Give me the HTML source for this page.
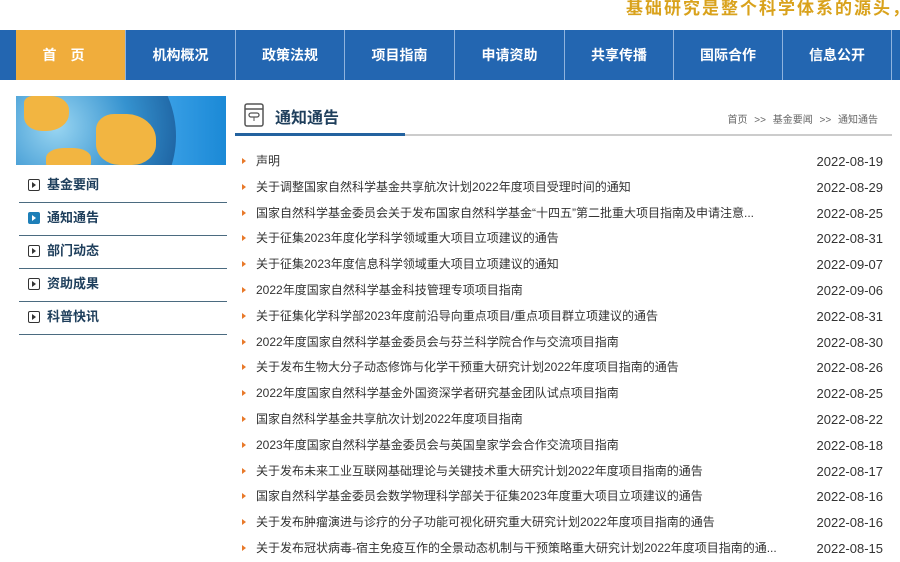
<!DOCTYPE html>
<html><head><meta charset="utf-8"><style>
*{margin:0;padding:0;box-sizing:border-box}
body{width:900px;height:554px;overflow:hidden;background:#fff;font-family:"Liberation Sans","Noto Sans CJK SC",sans-serif;position:relative}
.slogan{position:absolute;left:626px;top:-2px;font-size:17px;font-weight:bold;color:#d9a21c;letter-spacing:2px;white-space:nowrap;line-height:22px}
.nav{position:absolute;left:0;top:30px;width:900px;height:50px;background:#2366b1}
.nav div{position:absolute;top:0;height:50px;line-height:50px;text-align:center;color:#fff;font-weight:bold;font-size:14px;border-left:1px solid #8fb3de}
.nav .on{background:#f0ad3c;border-left:none}
.banner{position:absolute;left:16px;top:96px;width:210px;height:69px;background:linear-gradient(90deg,#1a78c4,#3aa0e6 70%,#1b89d6);overflow:hidden}
.globe{position:absolute;left:-40px;top:-60px;width:200px;height:200px;border-radius:50%;background:radial-gradient(circle at 40% 45%,#9ad6f2,#3592cf 45%,#1c5f9e 80%)}
.land{position:absolute;border-radius:40%;background:#f2b541}
.side{position:absolute;left:19px;top:170px;width:208px}
.side div{height:33px;border-bottom:1px solid #4b6b80;font-size:13px;font-weight:bold;color:#1f3f5c;line-height:30px;padding-left:28px;position:relative}
.side div:before{content:"";position:absolute;left:9px;top:9px;width:10px;height:10px;border:1px solid #333;border-radius:2px}
.side div:after{content:"";position:absolute;left:13px;top:12px;border-left:4px solid #333;border-top:3px solid transparent;border-bottom:3px solid transparent}
.side .act:before{background:#1e7fb8;border-color:#1e7fb8}
.side .act:after{border-left-color:#fff}
.head{position:absolute;left:235px;top:96px;width:657px;height:40px}
.title{position:absolute;left:40px;top:8px;font-size:16px;font-weight:bold;color:#1f3f5c}
.bar1{position:absolute;left:0;top:37px;width:170px;height:3px;background:#23629f}
.bar2{position:absolute;left:170px;top:38px;width:487px;height:2px;background:#ccc}
.crumb{position:absolute;right:14px;top:15px;font-size:10px;color:#666;word-spacing:4px}
.list{position:absolute;left:242px;top:149px;width:641px}
.row{height:25.8px;line-height:25.8px;font-size:12px;color:#333;position:relative;padding-left:14px;white-space:nowrap}
.row:before{content:"";position:absolute;left:0;top:9px;border-left:4px solid #e8792a;border-top:3px solid transparent;border-bottom:3px solid transparent}
.row span{position:absolute;right:0;top:0;font-size:13px}
</style></head><body>
<div class="slogan">基础研究是整个科学体系的源头，</div>
<div class="nav">
<div class="on" style="left:16px;width:109px;letter-spacing:14px">首页</div>
<div style="left:125px;width:110px">机构概况</div>
<div style="left:235px;width:109px">政策法规</div>
<div style="left:344px;width:110px">项目指南</div>
<div style="left:454px;width:110px">申请资助</div>
<div style="left:564px;width:109px">共享传播</div>
<div style="left:673px;width:109px">国际合作</div>
<div style="left:782px;width:109px">信息公开</div>
<div style="left:891px;width:9px"></div>
</div>
<div class="banner"><div class="globe"></div>
<div class="land" style="left:8px;top:0px;width:45px;height:35px;border-radius:20% 40% 50% 40%"></div>
<div class="land" style="left:80px;top:18px;width:60px;height:51px;border-radius:30% 50% 40% 40%"></div>
<div class="land" style="left:30px;top:52px;width:45px;height:25px"></div>
</div>
<div class="side">
<div>基金要闻</div><div class="act">通知通告</div><div>部门动态</div><div>资助成果</div><div>科普快讯</div>
</div>
<div class="head">
<svg style="position:absolute;left:9px;top:7px" width="20" height="24" viewBox="0 0 20 24"><rect x="1" y="1" width="18" height="22" rx="2" fill="none" stroke="#555" stroke-width="1.5"/><line x1="1" y1="6" x2="19" y2="6" stroke="#555" stroke-width="1.5"/><rect x="5" y="10" width="10" height="4" rx="2" fill="none" stroke="#555" stroke-width="1.3"/><line x1="10" y1="14" x2="10" y2="18" stroke="#555"/></svg>
<div class="title">通知通告</div>
<div class="crumb">首页 &gt;&gt; 基金要闻 &gt;&gt; 通知通告</div>
<div class="bar1"></div><div class="bar2"></div>
</div>
<div class="list">
<div class="row">声明<span>2022-08-19</span></div>
<div class="row">关于调整国家自然科学基金共享航次计划2022年度项目受理时间的通知<span>2022-08-29</span></div>
<div class="row">国家自然科学基金委员会关于发布国家自然科学基金“十四五”第二批重大项目指南及申请注意...<span>2022-08-25</span></div>
<div class="row">关于征集2023年度化学科学领域重大项目立项建议的通告<span>2022-08-31</span></div>
<div class="row">关于征集2023年度信息科学领域重大项目立项建议的通知<span>2022-09-07</span></div>
<div class="row">2022年度国家自然科学基金科技管理专项项目指南<span>2022-09-06</span></div>
<div class="row">关于征集化学科学部2023年度前沿导向重点项目/重点项目群立项建议的通告<span>2022-08-31</span></div>
<div class="row">2022年度国家自然科学基金委员会与芬兰科学院合作与交流项目指南<span>2022-08-30</span></div>
<div class="row">关于发布生物大分子动态修饰与化学干预重大研究计划2022年度项目指南的通告<span>2022-08-26</span></div>
<div class="row">2022年度国家自然科学基金外国资深学者研究基金团队试点项目指南<span>2022-08-25</span></div>
<div class="row">国家自然科学基金共享航次计划2022年度项目指南<span>2022-08-22</span></div>
<div class="row">2023年度国家自然科学基金委员会与英国皇家学会合作交流项目指南<span>2022-08-18</span></div>
<div class="row">关于发布未来工业互联网基础理论与关键技术重大研究计划2022年度项目指南的通告<span>2022-08-17</span></div>
<div class="row">国家自然科学基金委员会数学物理科学部关于征集2023年度重大项目立项建议的通告<span>2022-08-16</span></div>
<div class="row">关于发布肿瘤演进与诊疗的分子功能可视化研究重大研究计划2022年度项目指南的通告<span>2022-08-16</span></div>
<div class="row">关于发布冠状病毒-宿主免疫互作的全景动态机制与干预策略重大研究计划2022年度项目指南的通...<span>2022-08-15</span></div>
</div>
</body></html>
